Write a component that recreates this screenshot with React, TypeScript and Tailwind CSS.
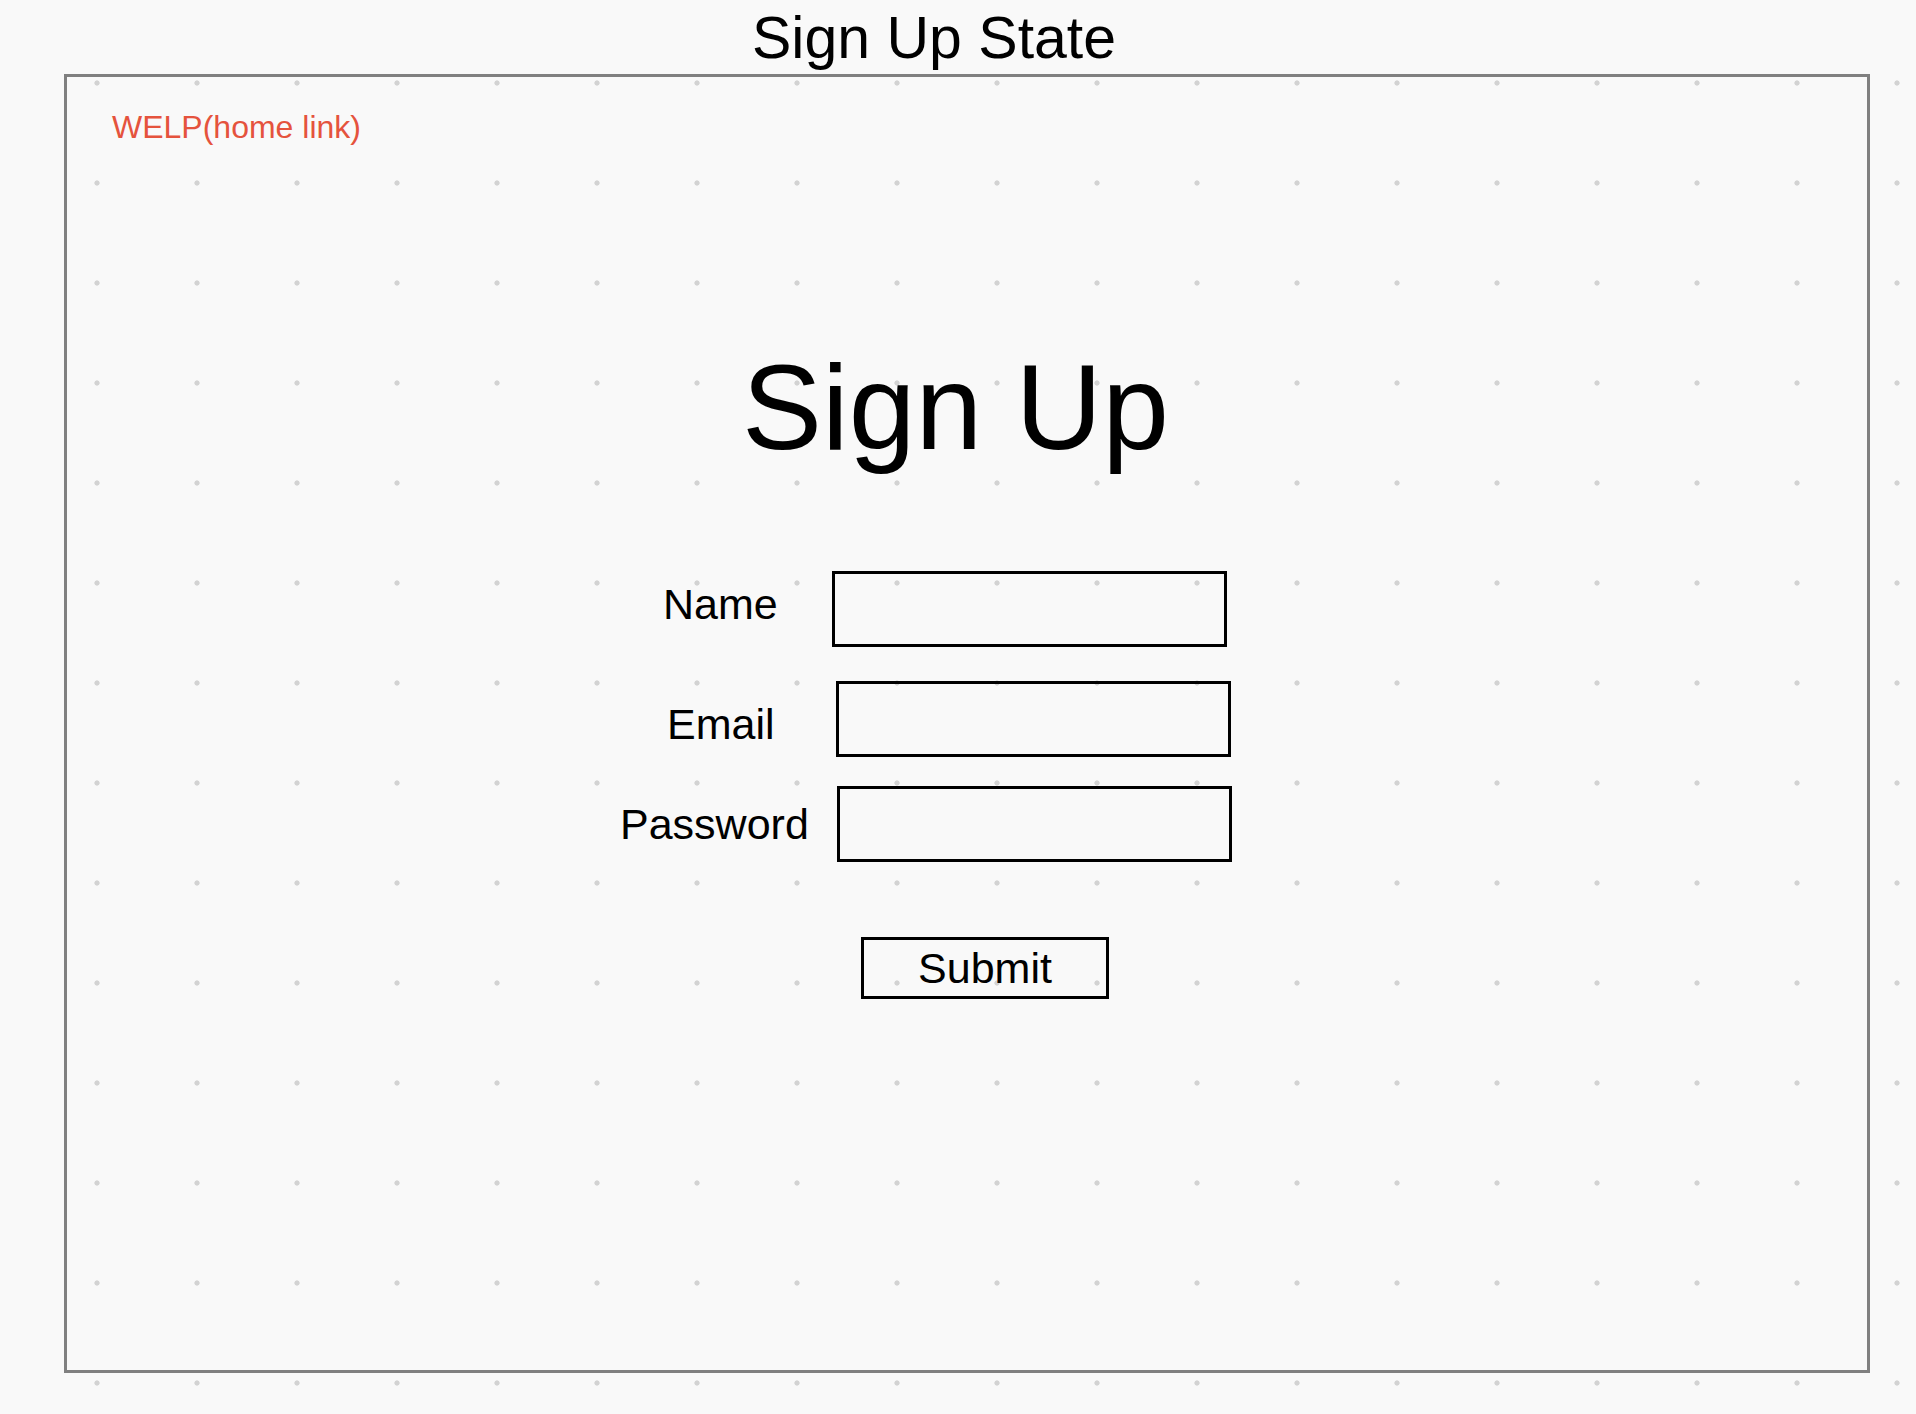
import React from 'react';

// mockup of the sign up state, labels/inputs placed per the wireframe
const fields = [
    { label: 'Name', type: 'text', row: 'mt-[104px]', labelCls: 'ml-[596px] mt-[12px]', inputCls: 'ml-[54px]' },
    { label: 'Email', type: 'email', row: 'mt-[34px]', labelCls: 'ml-[600px] mt-[22px]', inputCls: 'ml-[61px]' },
    { label: 'Password', type: 'password', row: 'mt-[29px]', labelCls: 'ml-[553px] mt-[17px]', inputCls: 'ml-[28px]' },
];

const App: React.FC = () => {
    return (
        <div className="min-h-screen w-full bg-[#f9f9f9] bg-[radial-gradient(circle,#d3d3d3_2.2px,transparent_3px)] bg-[length:100px_100px] bg-[position:47px_33px] font-['Liberation_Sans',Arial,sans-serif] text-black">
            {/* Page title */}
            <div className="pt-[9px] pl-[752px] text-[59px] leading-none whitespace-nowrap">Sign Up State</div>

            {/* Frame */}
            <div className="ml-[64px] mt-[6px] w-[1806px] h-[1299px] border-[3px] border-[#808080] flex flex-col">
                <a href="#" className="self-start pt-[34px] pl-[45px] text-[32px] leading-none text-[#e5533d] whitespace-nowrap">
                    WELP(home link)
                </a>

                <h1 className="self-start mt-[204px] ml-[675px] text-[120px] leading-none font-normal whitespace-nowrap">
                    Sign Up
                </h1>

                <form className="flex flex-col" onSubmit={(e) => e.preventDefault()}>
                    {fields.map(({ label, type, row, labelCls, inputCls }) => (
                        <div key={label} className={`flex items-start ${row}`}>
                            <label className={`text-[43px] leading-none whitespace-nowrap ${labelCls}`}>{label}</label>
                            <input
                                type={type}
                                className={`w-[395px] h-[76px] border-[3px] border-black bg-transparent outline-none px-3 text-[28px] ${inputCls}`}
                            />
                        </div>
                    ))}

                    <button
                        type="submit"
                        className="self-start mt-[75px] ml-[794px] w-[248px] h-[62px] border-[3px] border-black bg-transparent flex items-center justify-center text-[43px] leading-none"
                    >
                        Submit
                    </button>
                </form>
            </div>
        </div>
    );
};

export default App;
